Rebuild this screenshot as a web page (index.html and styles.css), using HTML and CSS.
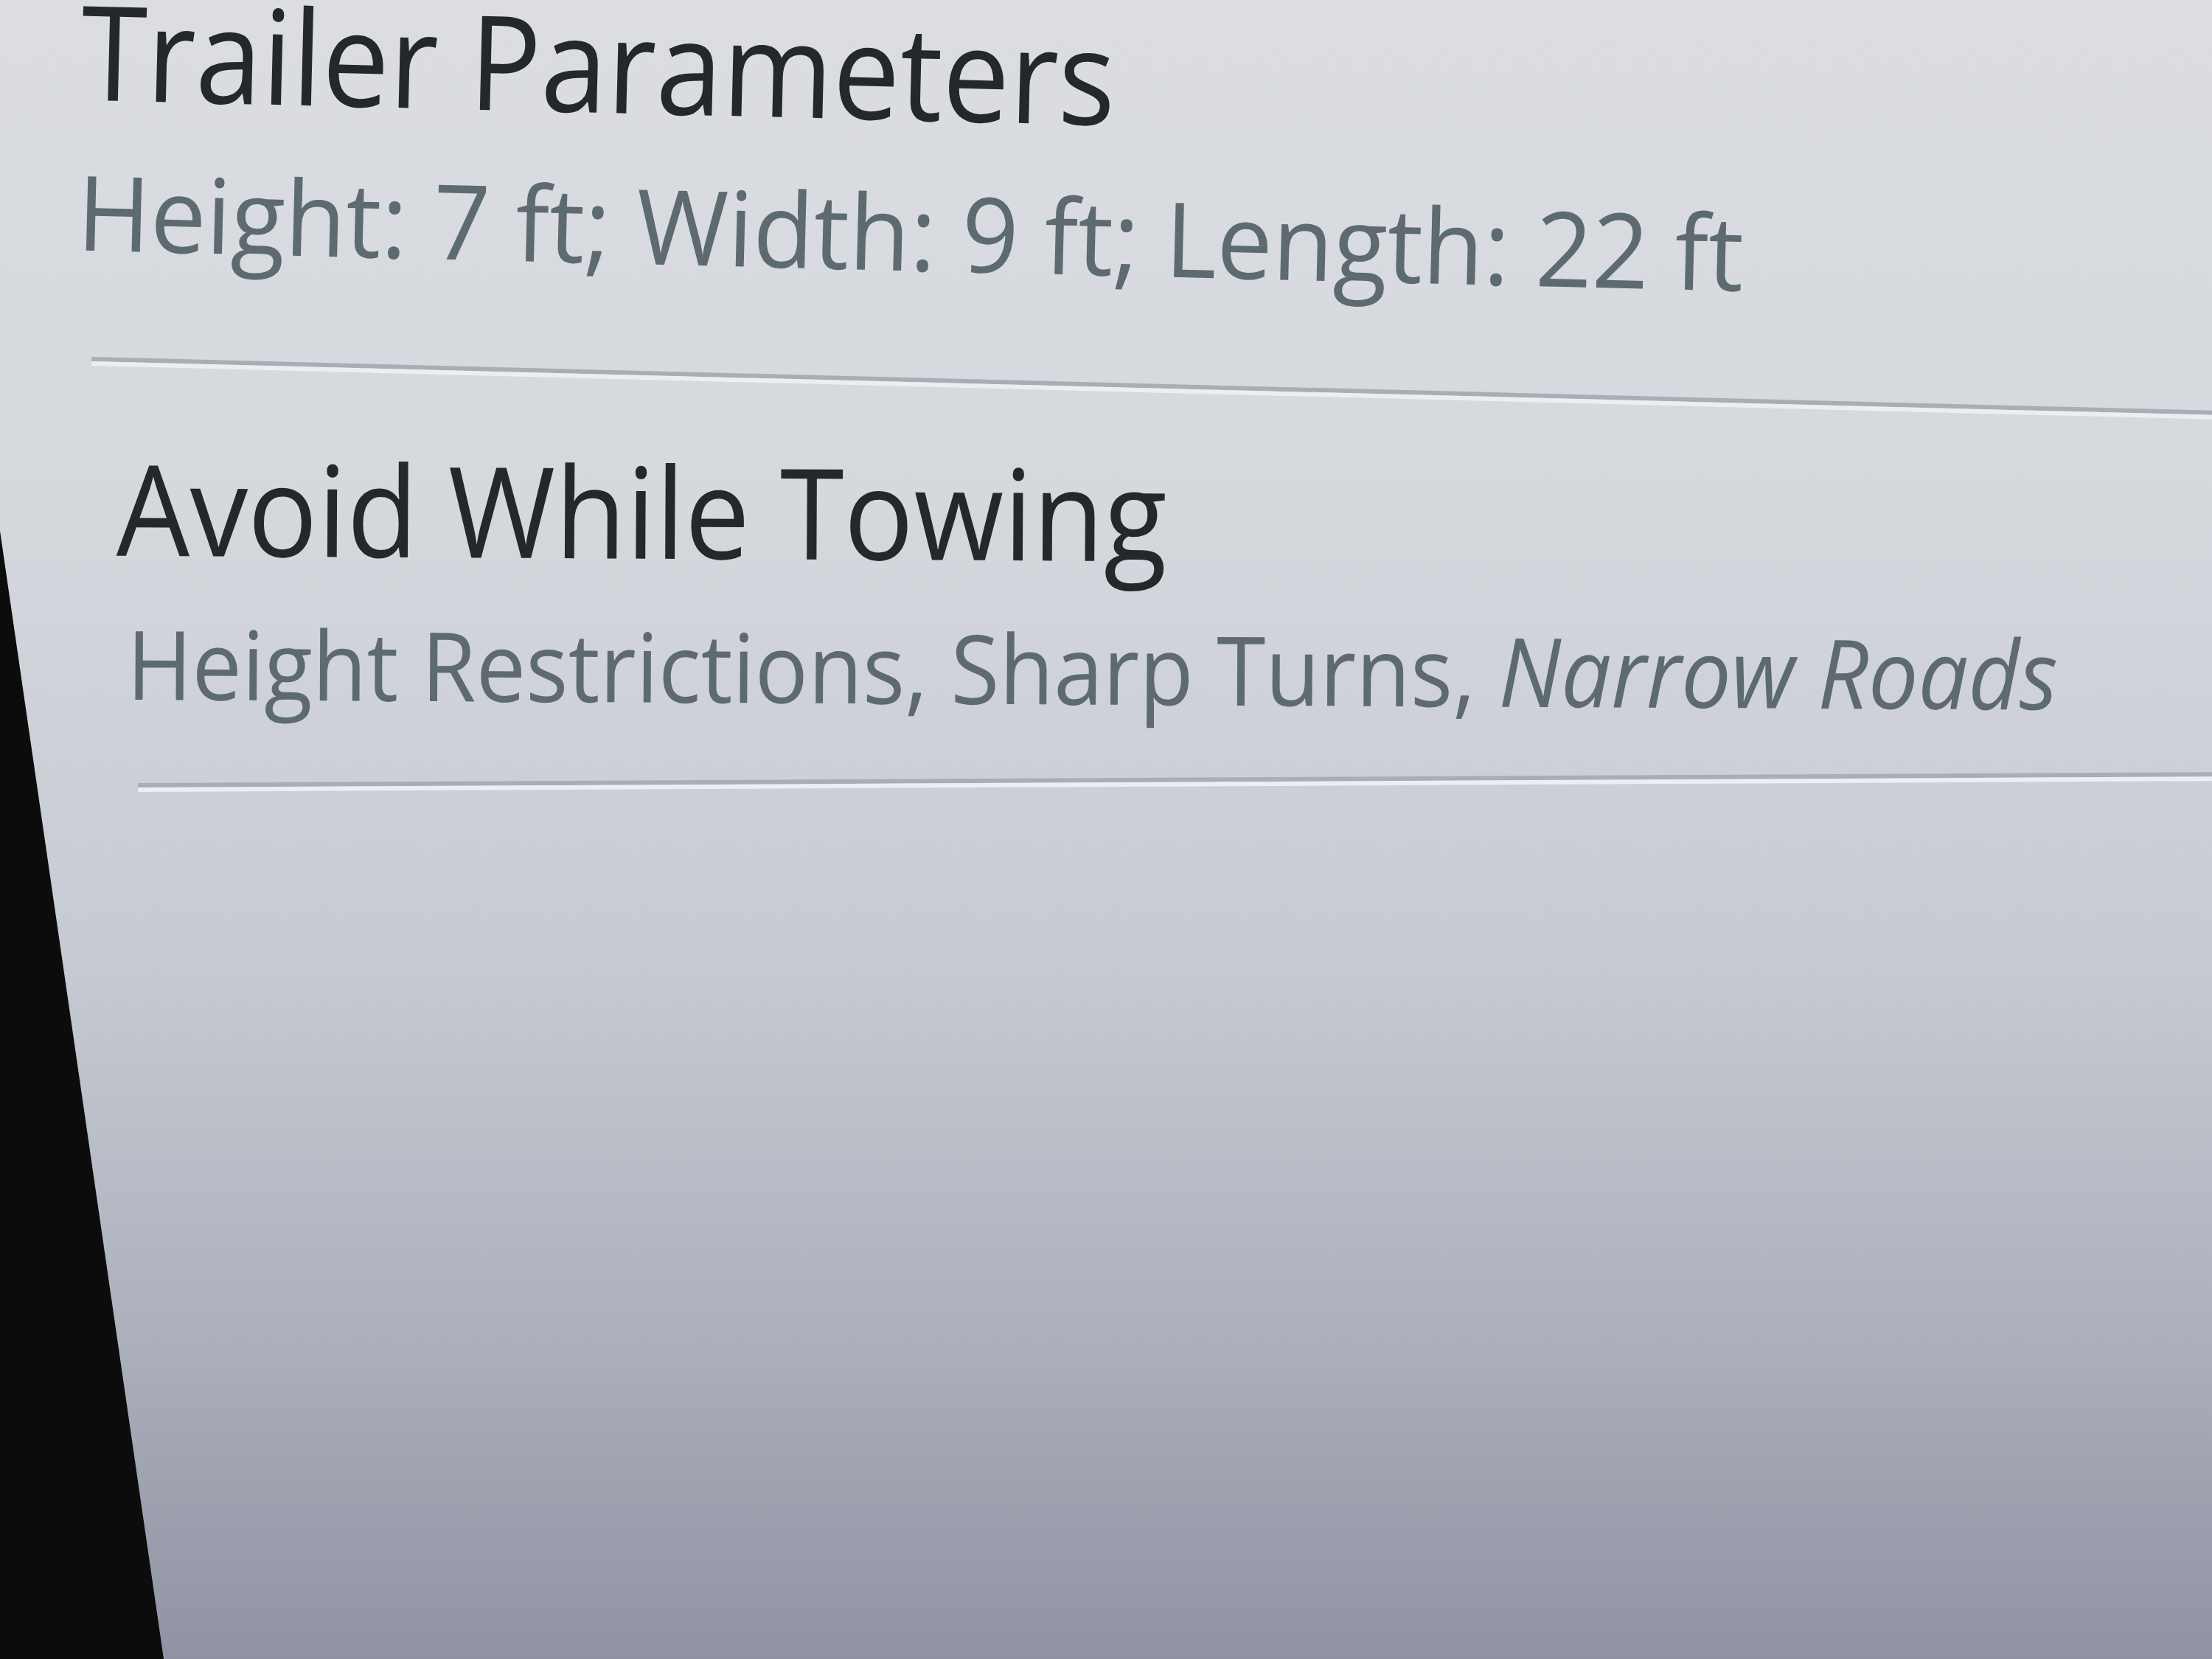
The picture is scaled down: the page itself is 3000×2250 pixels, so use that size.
FILE: index.html
```html
<!DOCTYPE html>
<html lang="en">

<head>
    <meta charset="UTF-8">
    <meta name="viewport" content="width=device-width, initial-scale=1.0">
    <title>Trailer Settings</title>
    <link rel="stylesheet" href="styles.css">
</head>

<body>
    <div class="screen">
        <div class="list">
            <div class="row row-trailer">
                <h2 class="row-title">Trailer Parameters</h2>
                <p class="row-detail">Height: 7 ft; Width: 9 ft; Length: 22 ft</p>
            </div>
            <hr class="divider divider-first">

            <div class="row row-avoid">
                <h2 class="row-title">Avoid While Towing</h2>
                <p class="row-detail">Height Restrictions, Sharp Turns, <em>Narrow Roads</em></p>
            </div>
            <hr class="divider divider-second">
        </div>
    </div>
</body>

</html>
```

FILE: styles.css
```css
* {
    margin: 0;
    padding: 0;
    box-sizing: border-box;
    font-family: "Open Sans", "Noto Sans", sans-serif;
}

body,
html {
    width: 3000px;
    height: 2250px;
    overflow: hidden;
    background-color: #0c0c0c;
}

/* display panel, the bezel shows on the lower left */
.screen {
    width: 100%;
    height: 100%;
    overflow: hidden;
    background: linear-gradient(180deg, #dbdde1 0%, #d5d8dd 30%, #c6cad2 58%, #adb1bc 80%, #8f93a3 100%);
    clip-path: polygon(0 0, 100% 0, 100% 100%, 222px 100%, 0 720px);
}

.list {
    display: flex;
    flex-direction: column;
}

.row {
    display: flex;
    flex-direction: column;
    align-items: flex-start;
    transform-origin: 0 80%;
}

/* the head unit font runs narrower than Open Sans */
.row-title,
.row-detail {
    line-height: 1;
    white-space: nowrap;
    transform-origin: 0 50%;
}

.row-title {
    font-weight: 400;
    color: #25282b;
}

.row-detail {
    color: #5d6a70;
}

.row-detail em {
    font-style: italic;
}

/* first group */
.row-trailer {
    padding-left: 105px;
    transform: rotate(1.4deg);
}

.row-trailer .row-title {
    font-size: 178px;
    margin-top: -25px;
    transform: scaleX(0.91);
}

.row-trailer .row-detail {
    font-size: 141px;
    margin-top: 59px;
    transform: scaleX(0.955);
}

/* second group */
.row-avoid {
    padding-left: 157px;
    margin-top: 105px;
    transform: rotate(0.3deg);
}

.row-avoid .row-title {
    font-size: 171px;
    transform: scaleX(0.92);
}

.row-avoid .row-detail {
    font-size: 130px;
    margin-top: 61px;
    margin-left: 15px;
    transform: scaleX(0.925);
}

.divider {
    border: none;
    height: 12px;
    width: calc(100% + 200px);
    border-top: 6px solid #a9adb5;
    border-bottom: 6px solid #eceef1;
    transform-origin: 0 50%;
}

.divider-first {
    margin-top: 131px;
    margin-left: 124px;
    transform: rotate(1.45deg);
}

.divider-second {
    margin-top: 99px;
    margin-left: 187px;
    transform: rotate(-0.3deg);
}
```
